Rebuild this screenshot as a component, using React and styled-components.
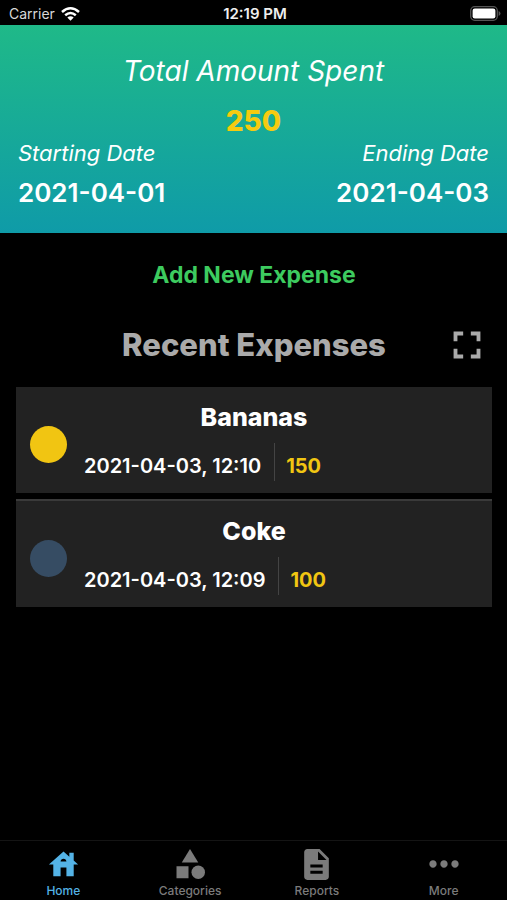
import React from 'react';
import styled, { createGlobalStyle } from 'styled-components';
import {
  MdCategory,
  MdDescription,
  MdFullscreen,
  MdMoreHoriz,
} from 'react-icons/md';

const GlobalStyle = createGlobalStyle`
  *, *::before, *::after { box-sizing: border-box; }
  body {
    margin: 0;
    background: #000;
    color: #fff;
    font-family: Inter, "Liberation Sans", sans-serif;
  }
  h1, h2, h3, p, dl, dt, dd, ul { margin: 0; padding: 0; }
  ul { list-style: none; }
`;

const Screen = styled.div`
  display: flex;
  flex-direction: column;
  min-height: 100vh;
`;

const StatusBar = styled.div`
  display: grid;
  grid-template-columns: 1fr auto 1fr;
  align-items: center;
  height: 25px;
  padding: 2px 6px 0 9px;
  line-height: 16px;
`;

const Carrier = styled.span`
  display: flex;
  align-items: center;
  gap: 6px;
  color: #d8d8d8;
  font-size: 14px;
`;

const Clock = styled.span`
  font-size: 15px;
  font-weight: 600;
  color: #eee;
`;

const BatterySlot = styled.span`
  display: flex;
  justify-content: flex-end;
`;

const Summary = styled.header`
  padding: 24px 18px 18px;
  background: linear-gradient(180deg, #1fb988 0%, #0f9ba8 100%);
`;

const SummaryTitle = styled.h1`
  font-size: 28px;
  line-height: 44px;
  font-style: italic;
  font-weight: 400;
  text-align: center;
`;

const Total = styled.p`
  padding-top: 6px;
  color: #f5cb10;
  font-size: 28px;
  line-height: 44px;
  font-weight: 800;
  text-align: center;
`;

const Dates = styled.dl`
  display: flex;
  justify-content: space-between;
`;

const DateBlock = styled.div`
  text-align: ${(p) => p.$align};
`;

const DateLabel = styled.dt`
  font-size: 22px;
  line-height: 20px;
  font-style: italic;
  font-weight: 400;
`;

const DateValue = styled.dd`
  padding-top: 8px;
  font-size: 26px;
  line-height: 44px;
  font-weight: 600;
`;

const Main = styled.main`
  flex: 1;
  padding: 24px 15px 0 16px;
`;

const AddButton = styled.button`
  display: block;
  margin: 0 auto;
  padding: 0;
  border: 0;
  background: none;
  color: #3dcb5f;
  font: inherit;
  font-size: 23px;
  line-height: 36px;
  font-weight: 700;
  cursor: pointer;
`;

const SectionHead = styled.div`
  display: grid;
  grid-template-columns: 46px 1fr 46px;
  align-items: center;
  margin: 29px 2px 19px;
`;

const SectionTitle = styled.h2`
  grid-column: 2;
  color: #aaa;
  font-size: 31px;
  line-height: 44px;
  font-weight: 800;
  text-align: center;
`;

const ExpandButton = styled.button`
  display: flex;
  padding: 0;
  border: 0;
  background: none;
  color: #aaa;
  cursor: pointer;
`;

const ExpenseList = styled.ul`
  display: grid;
  gap: 6px;
`;

const ExpenseCard = styled.li`
  display: grid;
  grid-template-columns: 37px 1fr 37px;
  gap: 8px 17px;
  padding: 12px 14px;
  background: #222;

  & + & {
    border-top: 2px solid #3a3a3a;
  }
`;

const CategoryDot = styled.span`
  grid-column: 1;
  grid-row: 1 / 3;
  align-self: center;
  width: 37px;
  height: 37px;
  margin-top: 8px;
  border-radius: 50%;
  background: ${(p) => p.$color};
`;

const ExpenseName = styled.h3`
  grid-column: 1 / -1;
  grid-row: 1;
  font-size: 25px;
  line-height: 36px;
  font-weight: 800;
  text-align: center;
`;

const ExpenseMeta = styled.p`
  grid-column: 2 / -1;
  grid-row: 2;
  display: flex;
  align-items: baseline;
  font-size: 20px;
  line-height: 24px;
  font-weight: 600;
`;

const Amount = styled.span`
  margin-left: 13px;
  padding: 11px 0 3px 11px;
  border-left: 1px solid #444;
  color: #f1c612;
  font-weight: 700;
`;

const TabBar = styled.nav`
  display: grid;
  grid-template-columns: repeat(4, 1fr);
  height: 60px;
  border-top: 1px solid #141414;
`;

const Tab = styled.a`
  display: flex;
  flex-direction: column;
  align-items: center;
  padding-top: 4px;
  color: ${(p) => (p.$active ? '#54b3e6' : '#7b7b7b')};
  text-decoration: none;
`;

const TabIcon = styled.span`
  display: flex;
  align-items: center;
  justify-content: center;
  height: 38px;
`;

const TabLabel = styled.span`
  font-size: 12px;
  line-height: 16px;
  font-weight: 500;
`;

function WifiIcon() {
  return (
    <svg width="19" height="14" viewBox="0 0 19 14" aria-hidden="true">
      <g fill="none" stroke="#fff" strokeWidth="2.5">
        <path d="M1 5 Q9.500 -2.400 18 5" />
        <path d="M4.200 8.300 Q9.500 3.700 14.800 8.300" />
      </g>
      <path d="M9.500 13.800 L6.300 10.500 Q9.500 7.900 12.700 10.500 Z" fill="#fff" />
    </svg>
  );
}

function BatteryIcon() {
  return (
    <svg width="31" height="15" viewBox="0 0 31 15" aria-hidden="true">
      <rect x="0.700" y="0.700" width="26.600" height="13.600" rx="4" fill="none" stroke="#555" strokeWidth="1.300" />
      <rect x="2.600" y="2.600" width="22.800" height="9.800" rx="2.200" fill="#fff" />
      <path d="M28.600 5 Q30.500 5.800 30.500 7.500 Q30.500 9.200 28.600 10 Z" fill="#555" />
    </svg>
  );
}

function HouseIcon({ size }) {
  return (
    <svg width={size} height={size} viewBox="0 0 24 24" fill="currentColor" aria-hidden="true">
      <path d="M19 9.300V4h-3v2.600L12 3 2 12h3v8h5v-6h4v6h5v-8h3l-3-2.700zm-9 .7c0-1.100.9-2 2-2s2 .9 2 2h-4z" />
    </svg>
  );
}

const expenses = [
  { name: 'Bananas', date: '2021-04-03, 12:10', amount: 150, color: '#f1c512' },
  { name: 'Coke', date: '2021-04-03, 12:09', amount: 100, color: '#364c63' },
];

const tabs = [
  { label: 'Home', Icon: HouseIcon, size: 35, active: true },
  { label: 'Categories', Icon: MdCategory, size: 36 },
  { label: 'Reports', Icon: MdDescription, size: 37 },
  { label: 'More', Icon: MdMoreHoriz, size: 44 },
];

export default function App() {
  return (
    <>
      <GlobalStyle />
      <Screen>
        <StatusBar>
          <Carrier>
            Carrier
            <WifiIcon />
          </Carrier>
          <Clock>12:19 PM</Clock>
          <BatterySlot>
            <BatteryIcon />
          </BatterySlot>
        </StatusBar>

        <Summary>
          <SummaryTitle>Total Amount Spent</SummaryTitle>
          <Total>250</Total>
          <Dates>
            <DateBlock $align="left">
              <DateLabel>Starting Date</DateLabel>
              <DateValue>2021-04-01</DateValue>
            </DateBlock>
            <DateBlock $align="right">
              <DateLabel>Ending Date</DateLabel>
              <DateValue>2021-04-03</DateValue>
            </DateBlock>
          </Dates>
        </Summary>

        <Main>
          <AddButton type="button">Add New Expense</AddButton>
          <SectionHead>
            <SectionTitle>Recent Expenses</SectionTitle>
            <ExpandButton type="button" aria-label="Show all expenses">
              <MdFullscreen size={46} />
            </ExpandButton>
          </SectionHead>
          <ExpenseList>
            {expenses.map((e) => (
              <ExpenseCard key={e.name}>
                <CategoryDot $color={e.color} />
                <ExpenseName>{e.name}</ExpenseName>
                <ExpenseMeta>
                  {e.date}
                  <Amount>{e.amount}</Amount>
                </ExpenseMeta>
              </ExpenseCard>
            ))}
          </ExpenseList>
        </Main>

        <TabBar>
          {tabs.map(({ label, Icon, size, active }) => (
            <Tab key={label} href={`#${label.toLowerCase()}`} $active={active}>
              <TabIcon>
                <Icon size={size} />
              </TabIcon>
              <TabLabel>{label}</TabLabel>
            </Tab>
          ))}
        </TabBar>
      </Screen>
    </>
  );
}
